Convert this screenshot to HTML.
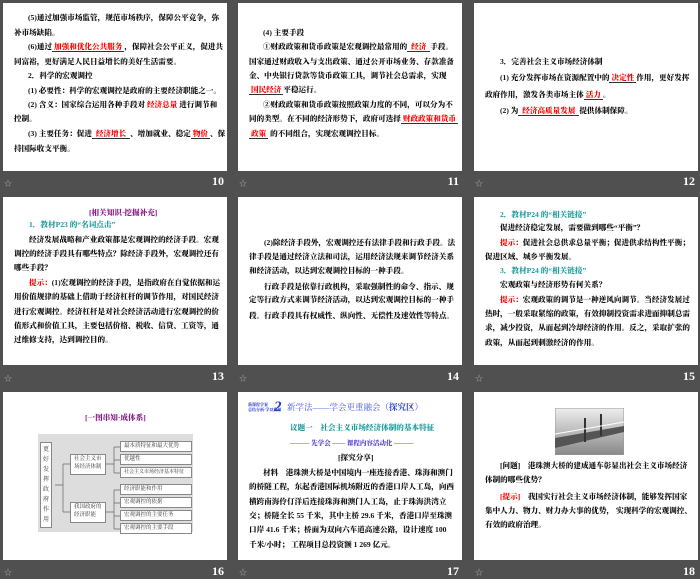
<!DOCTYPE html><html><head><meta charset="utf-8"><style>
*{margin:0;padding:0;box-sizing:border-box}
body{width:700px;height:577px;background:#505050;position:relative;overflow:hidden;font-family:"Liberation Serif","Noto Serif CJK SC",serif}
.s{position:absolute;width:224px;height:168px;background:#fff;overflow:hidden}
.l{position:absolute;font-size:7.6px;font-weight:900;color:#111;white-space:nowrap;line-height:10px;height:10px}
.r{color:#f00}
.u{border-bottom:1px solid #333;color:#f00;padding:0 2px}
.t{color:#199a9a}
.p{color:#8a1a8a}
.f{position:absolute;color:#aaa;font-size:8px}
.n{position:absolute;color:#fff;font-weight:bold;font-size:12px;width:30px;text-align:right}
.bx{position:absolute;border:1px solid #888;background:#fff;font-size:5.5px;color:#333;line-height:9px;padding-left:3px;white-space:nowrap}
</style></head><body>

<!-- slide 10 -->
<div class="s" style="left:3px;top:3px">
<div class="l" style="left:25px;top:10px">(5)通过加强市场监管，规范市场秩序，保障公平竞争，弥</div>
<div class="l" style="left:11px;top:25px">补市场缺陷。</div>
<div class="l" style="left:25px;top:39px">(6)通过<span class="u">加强和优化公共服务</span>，保障社会公平正义，促进共</div>
<div class="l" style="left:11px;top:54px">同富裕，更好满足人民日益增长的美好生活需要。</div>
<div class="l" style="left:25px;top:68px">2．科学的宏观调控</div>
<div class="l" style="left:25px;top:83px">(1) 必要性：科学的宏观调控是政府的主要经济职能之一。</div>
<div class="l" style="left:25px;top:97px">(2) 含义：国家综合运用各种手段对 <span class="r">经济总量</span> 进行调节和</div>
<div class="l" style="left:11px;top:111px">控制。</div>
<div class="l" style="left:25px;top:126px">(3) 主要任务：促进<span class="u">&nbsp;经济增长&nbsp;</span>、增加就业、稳定<span class="u">物价</span>、保</div>
<div class="l" style="left:11px;top:141px">持国际收支平衡。</div>
</div>
<div class="f" style="left:4px;top:178px">☆</div><div class="n" style="left:194px;top:174px">10</div>

<!-- slide 11 -->
<div class="s" style="left:238px;top:3px">
<div class="l" style="left:25px;top:25px">(4) 主要手段</div>
<div class="l" style="left:25px;top:39px">①财政政策和货币政策是宏观调控最常用的<span class="u">&nbsp;经济&nbsp;</span>手段。</div>
<div class="l" style="left:11px;top:54px">国家通过财政收入与支出政策、通过公开市场业务、存款准备</div>
<div class="l" style="left:11px;top:68px">金、中央银行贷款等货币政策工具，调节社会总需求，实现</div>
<div class="l" style="left:11px;top:82px"><span class="u">国民经济</span>平稳运行。</div>
<div class="l" style="left:25px;top:97px">②财政政策和货币政策按照政策力度的不同，可以分为不</div>
<div class="l" style="left:11px;top:111px">同的类型。在不同的经济形势下，政府可选择<span class="u">财政政策和货币</span></div>
<div class="l" style="left:11px;top:126px"><span class="u">政策</span>&nbsp;的不同组合，实现宏观调控目标。</div>
</div>
<div class="f" style="left:239px;top:178px">☆</div><div class="n" style="left:429px;top:174px">11</div>

<!-- slide 12 -->
<div class="s" style="left:474px;top:3px">
<div class="l" style="left:26px;top:54px">3．完善社会主义市场经济体制</div>
<div class="l" style="left:26px;top:70px">(1) 充分发挥市场在资源配置中的<span class="u">决定性</span>作用，更好发挥</div>
<div class="l" style="left:11px;top:87px">政府作用，激发各类市场主体<span class="u">活力</span>。</div>
<div class="l" style="left:26px;top:103px">(2) 为<span class="u">&nbsp;经济高质量发展&nbsp;</span>提供体制保障。</div>
</div>
<div class="f" style="left:475px;top:178px">☆</div><div class="n" style="left:665px;top:174px">12</div>

<!-- slide 13 -->
<div class="s" style="left:3px;top:197px">
<div class="l p" style="left:86px;top:11px">[相关知识·挖掘补充]</div>
<div class="l t" style="left:26px;top:23px">1．教材P23 的“名词点击”</div>
<div class="l" style="left:26px;top:38px">经济发展战略和产业政策都是宏观调控的经济手段。宏观</div>
<div class="l" style="left:11px;top:52px">调控的经济手段具有哪些特点？除经济手段外，宏观调控还有</div>
<div class="l" style="left:11px;top:66px">哪些手段？</div>
<div class="l" style="left:26px;top:81px"><span class="r">提示：</span>(1)宏观调控的经济手段，是指政府在自觉依据和运</div>
<div class="l" style="left:11px;top:95px">用价值规律的基础上借助于经济杠杆的调节作用，对国民经济</div>
<div class="l" style="left:11px;top:110px">进行宏观调控。经济杠杆是对社会经济活动进行宏观调控的价</div>
<div class="l" style="left:11px;top:124px">值形式和价值工具，主要包括价格、税收、信贷、工资等，通</div>
<div class="l" style="left:11px;top:138px">过维修支持，达到调控目的。</div>
</div>
<div class="f" style="left:4px;top:373px">☆</div><div class="n" style="left:194px;top:369px">13</div>

<!-- slide 14 -->
<div class="s" style="left:238px;top:197px">
<div class="l" style="left:26px;top:41px">(2)除经济手段外，宏观调控还有法律手段和行政手段。法</div>
<div class="l" style="left:11px;top:55px">律手段是通过经济立法和司法，运用经济法规来调节经济关系</div>
<div class="l" style="left:11px;top:69px">和经济活动，以达到宏观调控目标的一种手段。</div>
<div class="l" style="left:26px;top:85px">行政手段是依靠行政机构，采取强制性的命令、指示、规</div>
<div class="l" style="left:11px;top:98px">定等行政方式来调节经济活动，以达到宏观调控目标的一种手</div>
<div class="l" style="left:11px;top:114px">段。行政手段具有权威性、纵向性、无偿性及速效性等特点。</div>
</div>
<div class="f" style="left:239px;top:373px">☆</div><div class="n" style="left:429px;top:369px">14</div>

<!-- slide 15 -->
<div class="s" style="left:474px;top:197px">
<div class="l t" style="left:26px;top:13px">2．教材P24 的“相关链接”</div>
<div class="l" style="left:26px;top:26px">促进经济稳定发展，需要做到哪些“平衡”？</div>
<div class="l" style="left:26px;top:41px"><span class="r">提示：</span>促进社会总供求总量平衡；促进供求结构性平衡；</div>
<div class="l" style="left:11px;top:55px">促进区域、城乡平衡发展。</div>
<div class="l t" style="left:26px;top:69px">3．教材P24 的“相关链接”</div>
<div class="l" style="left:26px;top:83px">宏观政策与经济形势有何关系？</div>
<div class="l" style="left:26px;top:98px"><span class="r">提示：</span>宏观政策的调节是一种逆风向调节。当经济发展过</div>
<div class="l" style="left:11px;top:112px">热时，一般采取紧缩的政策，有效抑制投资需求进而抑制总需</div>
<div class="l" style="left:11px;top:126px">求，减少投资，从而起到冷却经济的作用。反之，采取扩张的</div>
<div class="l" style="left:11px;top:141px">政策，从而起到刺激经济的作用。</div>
</div>
<div class="f" style="left:475px;top:373px">☆</div><div class="n" style="left:665px;top:369px">15</div>

<!-- slide 16 -->
<div class="s" style="left:3px;top:392px">
<div class="l p" style="left:82px;top:21px">[一图串知·成体系]</div>
<div style="position:absolute;left:35px;top:42px;width:155px;height:98px;background:#ddd"></div>
<div class="bx" style="left:37px;top:50px;width:12px;height:86px;white-space:normal;line-height:10px;font-size:6px;padding:2px 2px">更好发挥政府作用</div>
<div class="bx" style="left:67px;top:62px;width:36px;height:21px;line-height:8px;font-size:5.5px">社会主义市<br>场经济体制</div>
<div class="bx" style="left:67px;top:110px;width:36px;height:21px;line-height:8px;font-size:5.5px">我国政府的<br>经济职能</div>
<div class="bx" style="left:117px;top:49px;width:72px;height:11px">最本质特征和最大优势</div>
<div class="bx" style="left:117px;top:62px;width:72px;height:11px">优越性</div>
<div class="bx" style="left:117px;top:75px;width:72px;height:11px;font-size:5px">社会主义市场经济基本特征</div>
<div class="bx" style="left:117px;top:92px;width:72px;height:11px">经济职能和作用</div>
<div class="bx" style="left:117px;top:105px;width:72px;height:11px">宏观调控的依据</div>
<div class="bx" style="left:117px;top:118px;width:72px;height:11px">宏观调控的主要任务</div>
<div class="bx" style="left:117px;top:131px;width:72px;height:11px">宏观调控的主要手段</div>
<svg style="position:absolute;left:0;top:0" width="224" height="168" fill="none" stroke="#666" stroke-width="0.7">
<path d="M52 93H60M60 72V120M60 72H67M60 120H67M103 72H111M111 55V81M111 55H117M111 68H117M111 81H117M103 120H111M111 98V137M111 98H117M111 111H117M111 124H117M111 137H117"/></svg>
</div>
<div class="f" style="left:4px;top:567px">☆</div><div class="n" style="left:194px;top:564px">16</div>

<!-- slide 17 -->
<div class="s" style="left:238px;top:392px">
<div class="l" style="left:10px;top:10px;font-size:4px;line-height:5px;color:#3a4fd0;height:auto">新课程学案<br>总结分析·学以致用</div>
<div class="l" style="left:36px;top:7px;font-size:15px;line-height:16px;height:16px;color:#2a3ec8;font-style:italic">2</div>
<div class="l" style="left:49px;top:10px;font-size:8.5px;color:#4a5ae0;font-weight:normal">新学法——学会更重融会（<b style="color:#2a3ec8">探究区</b>）</div>
<div class="l t" style="left:52px;top:31px">议题一　社会主义市场经济体制的基本特征</div>
<div class="l" style="left:52px;top:47px;color:#5040d0;font-size:6.5px">——— 先学会 —— 课程内容活动化 ———</div>
<div class="l" style="left:100px;top:61px">[探究分享]</div>
<div class="l" style="left:25px;top:76px">材料　港珠澳大桥是中国境内一座连接香港、珠海和澳门</div>
<div class="l" style="left:11px;top:90px">的桥隧工程，东起香港国际机场附近的香港口岸人工岛，向西</div>
<div class="l" style="left:11px;top:105px">横跨南海伶仃洋后连接珠海和澳门人工岛，止于珠海洪湾立</div>
<div class="l" style="left:11px;top:119px">交；桥隧全长 55 千米，其中主桥 29.6 千米，香港口岸至珠澳</div>
<div class="l" style="left:11px;top:133px">口岸 41.6 千米；桥面为双向六车道高速公路，设计速度 100</div>
<div class="l" style="left:11px;top:148px">千米/小时； 工程项目总投资额 1 269 亿元。</div>
</div>
<div class="f" style="left:239px;top:567px">☆</div><div class="n" style="left:429px;top:564px">17</div>

<!-- slide 18 -->
<div class="s" style="left:474px;top:392px">
<svg style="position:absolute;left:81px;top:16px" width="69" height="47"><defs><linearGradient id="g" x1="0" y1="0" x2="0" y2="1"><stop offset="0" stop-color="#eee"/><stop offset="1" stop-color="#888"/></linearGradient></defs>
<rect width="69" height="47" fill="url(#g)" stroke="#999"/><path d="M0 30L69 18L69 24L0 40Z" fill="#555"/><path d="M30 10V34M46 6V28" stroke="#333" stroke-width="2"/><path d="M0 26L69 14" stroke="#fff" stroke-width="1"/></svg>
<div class="l" style="left:26px;top:69px">[问题]　港珠澳大桥的建成通车彰显出社会主义市场经济</div>
<div class="l" style="left:11px;top:83px">体制的哪些优势？</div>
<div class="l" style="left:26px;top:100px"><span class="r">[提示]</span>　我国实行社会主义市场经济体制，能够发挥国家</div>
<div class="l" style="left:11px;top:114px">集中人力、物力、财力办大事的优势， 实现科学的宏观调控、</div>
<div class="l" style="left:11px;top:128px">有效的政府治理。</div>
</div>
<div class="f" style="left:475px;top:567px">☆</div><div class="n" style="left:665px;top:564px">18</div>

</body></html>
